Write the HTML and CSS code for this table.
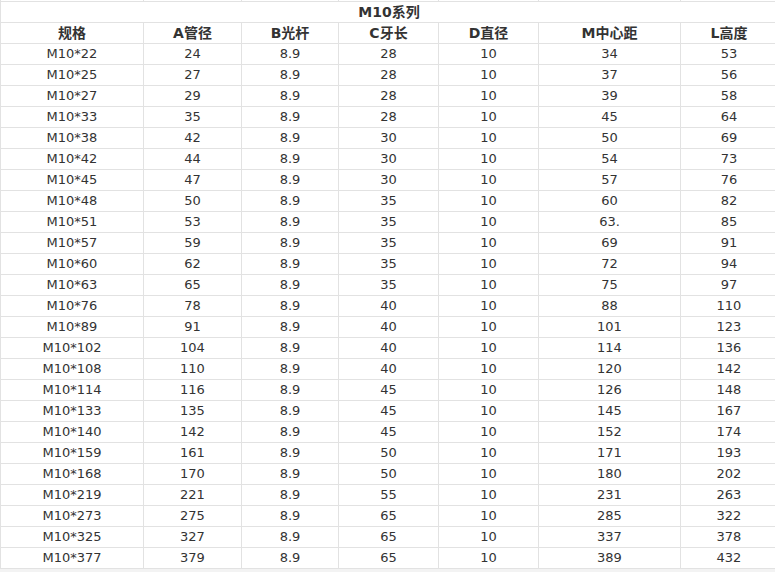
FILE: index.html
```html
<!DOCTYPE html>
<html lang="zh">
<head>
<meta charset="utf-8">
<title>M10系列</title>
<link rel="stylesheet" href="styles.css">
</head>
<body>
<table class="spec">
<colgroup>
<col class="c1"><col class="c2"><col class="c3"><col class="c4"><col class="c5"><col class="c6"><col class="c7">
</colgroup>
<tr class="stub"><td></td><td></td><td></td><td></td><td></td><td></td><td></td></tr>
<tr class="title"><th colspan="7">M10系列</th></tr>
<tr class="head"><th>规格</th><th>A管径</th><th>B光杆</th><th>C牙长</th><th>D直径</th><th>M中心距</th><th>L高度</th></tr>
<tr><td>M10*22</td><td>24</td><td>8.9</td><td>28</td><td>10</td><td>34</td><td>53</td></tr>
<tr><td>M10*25</td><td>27</td><td>8.9</td><td>28</td><td>10</td><td>37</td><td>56</td></tr>
<tr><td>M10*27</td><td>29</td><td>8.9</td><td>28</td><td>10</td><td>39</td><td>58</td></tr>
<tr><td>M10*33</td><td>35</td><td>8.9</td><td>28</td><td>10</td><td>45</td><td>64</td></tr>
<tr><td>M10*38</td><td>42</td><td>8.9</td><td>30</td><td>10</td><td>50</td><td>69</td></tr>
<tr><td>M10*42</td><td>44</td><td>8.9</td><td>30</td><td>10</td><td>54</td><td>73</td></tr>
<tr><td>M10*45</td><td>47</td><td>8.9</td><td>30</td><td>10</td><td>57</td><td>76</td></tr>
<tr><td>M10*48</td><td>50</td><td>8.9</td><td>35</td><td>10</td><td>60</td><td>82</td></tr>
<tr><td>M10*51</td><td>53</td><td>8.9</td><td>35</td><td>10</td><td>63.</td><td>85</td></tr>
<tr><td>M10*57</td><td>59</td><td>8.9</td><td>35</td><td>10</td><td>69</td><td>91</td></tr>
<tr><td>M10*60</td><td>62</td><td>8.9</td><td>35</td><td>10</td><td>72</td><td>94</td></tr>
<tr><td>M10*63</td><td>65</td><td>8.9</td><td>35</td><td>10</td><td>75</td><td>97</td></tr>
<tr><td>M10*76</td><td>78</td><td>8.9</td><td>40</td><td>10</td><td>88</td><td>110</td></tr>
<tr><td>M10*89</td><td>91</td><td>8.9</td><td>40</td><td>10</td><td>101</td><td>123</td></tr>
<tr><td>M10*102</td><td>104</td><td>8.9</td><td>40</td><td>10</td><td>114</td><td>136</td></tr>
<tr><td>M10*108</td><td>110</td><td>8.9</td><td>40</td><td>10</td><td>120</td><td>142</td></tr>
<tr><td>M10*114</td><td>116</td><td>8.9</td><td>45</td><td>10</td><td>126</td><td>148</td></tr>
<tr><td>M10*133</td><td>135</td><td>8.9</td><td>45</td><td>10</td><td>145</td><td>167</td></tr>
<tr><td>M10*140</td><td>142</td><td>8.9</td><td>45</td><td>10</td><td>152</td><td>174</td></tr>
<tr><td>M10*159</td><td>161</td><td>8.9</td><td>50</td><td>10</td><td>171</td><td>193</td></tr>
<tr><td>M10*168</td><td>170</td><td>8.9</td><td>50</td><td>10</td><td>180</td><td>202</td></tr>
<tr><td>M10*219</td><td>221</td><td>8.9</td><td>55</td><td>10</td><td>231</td><td>263</td></tr>
<tr><td>M10*273</td><td>275</td><td>8.9</td><td>65</td><td>10</td><td>285</td><td>322</td></tr>
<tr><td>M10*325</td><td>327</td><td>8.9</td><td>65</td><td>10</td><td>337</td><td>378</td></tr>
<tr><td>M10*377</td><td>379</td><td>8.9</td><td>65</td><td>10</td><td>389</td><td>432</td></tr>
</table>
</body>
</html>
```
FILE: styles.css
```css
html, body {
  margin: 0;
  padding: 0;
  background: #f3f3f3;
}
.spec {
  border-collapse: collapse;
  table-layout: fixed;
  width: 777px;
  background: #ffffff;
  color: #333333;
  font-family: "DejaVu Sans", Verdana, "Noto Sans CJK SC", sans-serif;
  font-size: 13px;
}
.c1 { width: 143px; }
.c2 { width: 98px; }
.c3 { width: 97px; }
.c4 { width: 100px; }
.c5 { width: 100px; }
.c6 { width: 142px; }
.c7 { width: 97px; }
.spec td, .spec th {
  border: 1px solid #e2e2e2;
  padding: 0;
  height: 20px;
  line-height: 20px;
  text-align: center;
  white-space: nowrap;
}
.spec th {
  font-family: "DejaVu Sans", "Noto Sans CJK SC", sans-serif;
  font-size: 14px;
  font-weight: bold;
  color: #333333;
}
.spec .stub td {
  height: 1px;
  line-height: 1px;
  border-top: none;
}
```
